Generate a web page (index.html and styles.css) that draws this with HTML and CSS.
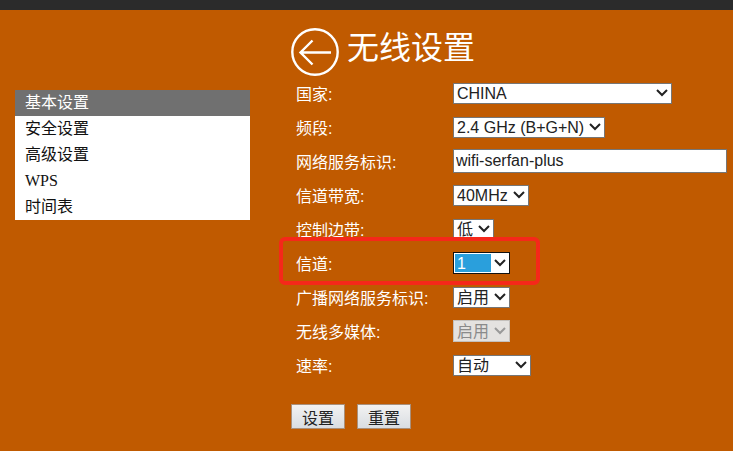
FILE: index.html
```html
<!DOCTYPE html>
<html lang="zh">
<head>
<meta charset="utf-8">
<title>无线设置</title>
<link rel="stylesheet" href="styles.css">
</head>
<body>
<div class="topbar"></div>
<div class="page">
  <ul class="menu">
    <li class="active">基本设置</li>
    <li>安全设置</li>
    <li>高级设置</li>
    <li class="wps">WPS</li>
    <li>时间表</li>
  </ul>
  <main class="content">
    <div class="heading">
      <svg class="back" viewBox="0 0 48 48" width="48" height="48" aria-hidden="true">
        <circle cx="24" cy="24" r="22.7" fill="none" stroke="#fff" stroke-width="2.4"/>
        <path d="M40 24.5H10M21.5 12.5 9.5 24.5l12 12" fill="none" stroke="#fff" stroke-width="2.4"/>
      </svg>
      <h1>无线设置</h1>
    </div>
    <form class="form">
      <label>国家:</label>
      <select class="w219"><option>CHINA</option></select>
      <label>频段:</label>
      <select class="w152"><option>2.4 GHz (B+G+N)</option></select>
      <label>网络服务标识:</label>
      <input class="text" type="text" value="wifi-serfan-plus">
      <label>信道带宽:</label>
      <select class="w76"><option>40MHz</option></select>
      <label>控制边带:</label>
      <select class="w41"><option>低</option></select>
      <label>信道:</label>
      <select class="w57 picked"><option>1</option></select>
      <label>广播网络服务标识:</label>
      <select class="w57"><option>启用</option></select>
      <label>无线多媒体:</label>
      <select class="w57" disabled><option>启用</option></select>
      <label>速率:</label>
      <select class="w78"><option>自动</option></select>
      <div class="buttons">
        <button type="button">设置</button>
        <button type="button">重置</button>
      </div>
      <div class="callout"></div>
    </form>
  </main>
</div>
</body>
</html>
```
FILE: styles.css
```css
* { box-sizing: border-box; }
html, body { margin: 0; height: 100%; overflow: hidden; }
body {
  background: #c05a00;
  font-family: "Liberation Sans", "Noto Sans CJK SC", sans-serif;
  font-size: 16px;
  color: #fff;
}
.topbar { height: 10px; background: #2b2b2b; }
.page { display: flex; align-items: flex-start; padding-left: 15px; }
.menu {
  width: 235px;
  margin: 80px 0 0;
  padding: 0;
  list-style: none;
  background: #fff;
  color: #111;
}
.menu li { height: 26px; line-height: 25px; padding-left: 10px; }
.menu .active { background: #707070; color: #fff; }
.menu .wps { font-family: "Liberation Serif", serif; font-size: 16px; }
.content { margin-left: 41px; }
.heading { display: flex; align-items: center; gap: 8px; margin-top: 18px; height: 48px; }
.back { flex: none; }
h1 { margin: 0; font-size: 32px; font-weight: 400; line-height: 40px; position: relative; top: -4px; }
.form {
  position: relative;
  display: grid;
  grid-template-columns: 157px 1fr;
  grid-auto-rows: 34px;
  margin: 0 0 0 5px;
  align-items: center;
  width: 435px;
}
.form label { line-height: 20px; color: #fff; position: relative; top: 2px; }
select, .text {
  height: 21px;
  font: 16px "Liberation Sans", "Noto Sans CJK SC", sans-serif;
  background-color: #fff;
  color: #222;
  border: 1px solid #767676;
  border-radius: 0;
  margin: 0;
}
select {
  appearance: none;
  padding: 0 0 0 3px;
  background-image: url("data:image/svg+xml,%3Csvg xmlns='http://www.w3.org/2000/svg' width='12' height='8'%3E%3Cpath d='M1 1l5 5 5-5' fill='none' stroke='%23222' stroke-width='2'/%3E%3C/svg%3E");
  background-repeat: no-repeat;
  background-position: right 3px center;
}
.text { width: 274px; height: 24px; padding: 0 2px; }
.w219 { width: 219px; }
.w152 { width: 152px; }
.w76 { width: 76px; }
.w41 { width: 41px; }
.w57 { width: 57px; }
.w78 { width: 78px; }
.picked {
  height: 22px;
  border-color: #111;
  background-image:
    url("data:image/svg+xml,%3Csvg xmlns='http://www.w3.org/2000/svg' width='12' height='8'%3E%3Cpath d='M1 1l5 5 5-5' fill='none' stroke='%23222' stroke-width='2'/%3E%3C/svg%3E"),
    linear-gradient(#2a9fdc, #2a9fdc);
  background-size: auto, 36px 18px;
  background-position: right 3px center, 1px 1px;
  color: #fff;
}
select:disabled {
  height: 22px;
  opacity: 1;
  background-color: #e4e2e0;
  color: #8a8a8a;
  border-color: #c4c0bc;
  background-image: url("data:image/svg+xml,%3Csvg xmlns='http://www.w3.org/2000/svg' width='12' height='8'%3E%3Cpath d='M1 1l5 5 5-5' fill='none' stroke='%23999' stroke-width='2'/%3E%3C/svg%3E");
}
.buttons { grid-column: 1 / -1; display: flex; gap: 12px; margin: 22px 0 0 -5px; align-self: start; }
button {
  width: 54px;
  height: 25px;
  padding: 0;
  font: 16px "Liberation Sans", "Noto Sans CJK SC", sans-serif;
  color: #222;
  background: linear-gradient(#f2f2f2, #d9dde2);
  border: 1px solid #a9907c;
}
.callout {
  position: absolute;
  left: -17px;
  top: 161px;
  width: 261px;
  height: 48px;
  border: 4px solid #f5281a;
  border-radius: 6px;
  pointer-events: none;
}
```
